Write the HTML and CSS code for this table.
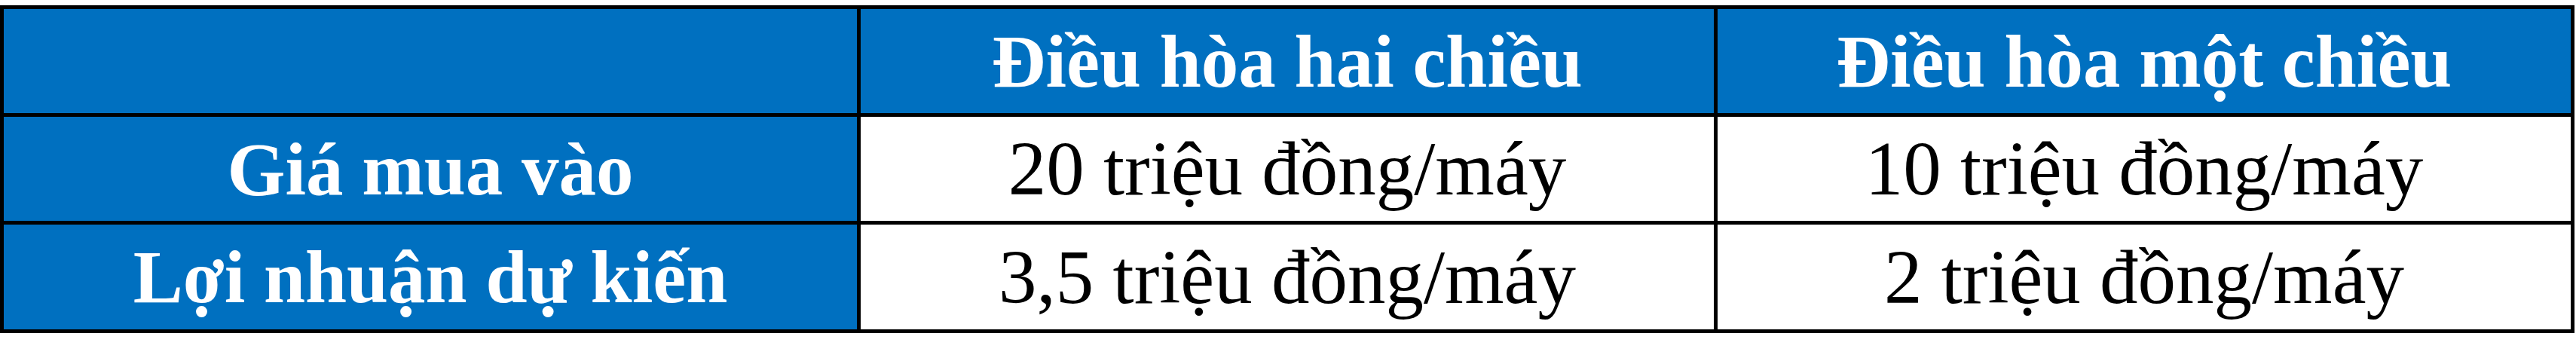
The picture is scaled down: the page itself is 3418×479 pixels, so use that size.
FILE: index.html
```html
<!DOCTYPE html>
<html lang="vi">
<head>
<meta charset="utf-8">
<title>Bảng so sánh điều hòa</title>
<link rel="stylesheet" href="styles.css">
</head>
<body>
<div class="table">
  <div class="cell head"></div>
  <div class="cell head">Điều hòa hai chiều</div>
  <div class="cell head">Điều hòa một chiều</div>
  <div class="cell head">Giá mua vào</div>
  <div class="cell data">20 triệu đồng/máy</div>
  <div class="cell data">10 triệu đồng/máy</div>
  <div class="cell head">Lợi nhuận dự kiến</div>
  <div class="cell data">3,5 triệu đồng/máy</div>
  <div class="cell data">2 triệu đồng/máy</div>
</div>
</body>
</html>
```

FILE: styles.css
```css
html, body {
  margin: 0;
  padding: 0;
  background: #ffffff;
}

body {
  padding-top: 7px;
}

.table {
  display: grid;
  grid-template-columns: 1132px 1132px 1132px;
  grid-template-rows: 138px 138px 139px;
  gap: 5px;
  padding: 5px;
  background: #000000;
  width: max-content;
  font-family: "Liberation Serif", "Times New Roman", serif;
}

.cell {
  display: flex;
  align-items: center;
  justify-content: center;
  white-space: nowrap;
  line-height: normal;
}

.head {
  background: #0070c0;
  color: #ffffff;
  font-weight: bold;
  font-size: 99px;
}

.data {
  background: #ffffff;
  color: #000000;
  font-size: 101px;
}
```
